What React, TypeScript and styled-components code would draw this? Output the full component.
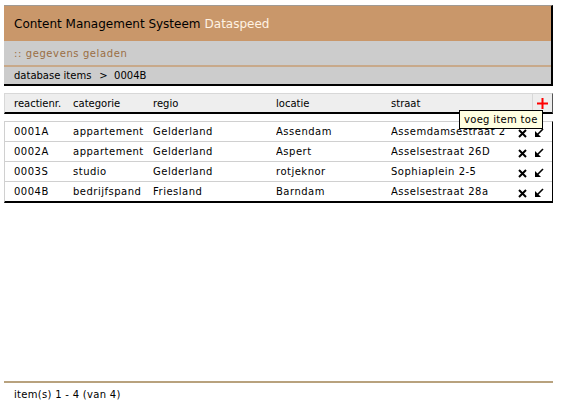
import React from "react";
import styled, { createGlobalStyle } from "styled-components";

const Global = createGlobalStyle`
  html, body { margin: 0; padding: 0; background: #fff; }
  body { font-family: "DejaVu Sans", Verdana, sans-serif; color: #000; }
`;

const Page = styled.div`
  width: 549px;
  margin-left: 4px;
  padding-top: 5px;
  height: 415px;
  display: flex;
  flex-direction: column;
`;

const Header = styled.div`
  border-top: 1px solid #a09a94;
  border-right: 2px solid #000;
  border-bottom: 2px solid #000;
`;

const TitleBar = styled.div`
  height: 35px;
  background: #c9976a;
  display: flex;
  align-items: center;
  padding-left: 10px;
  font-size: 12px;
  color: #000;
`;

const Brand = styled.span`
  color: #fff3e4;
  margin-left: 4px;
`;

const StatusBar = styled.div`
  height: 24px;
  background: #cccccc;
  border-bottom: 2px solid #c8a98a;
  display: flex;
  align-items: center;
  padding-left: 10px;
  font-size: 10px;
  letter-spacing: 0.6px;
  color: #9a6e44;
`;

const Crumb = styled.div`
  height: 17px;
  background: #cccccc;
  display: flex;
  align-items: center;
  padding-left: 10px;
  font-size: 10px;
  color: #000;
  gap: 8px;
`;

const cols = "59px 80px 123px 115px 124px 1fr";

const HeadRow = styled.div`
  margin-top: 7px;
  height: 18px;
  background: #eeeeee;
  border-top: 1px solid #d8d8d8;
  border-left: 1px solid #d8d8d8;
  border-right: 1px solid #555;
  border-bottom: 2px solid #000;
  display: grid;
  grid-template-columns: ${cols};
  align-items: center;
  padding-left: 9px;
  font-size: 10px;
  position: relative;
`;

const AddCell = styled.div`
  justify-self: end;
  align-self: stretch;
  width: 19px;
  border-left: 1px solid #d8d8d8;
  display: flex;
  align-items: center;
  justify-content: center;
`;

const Tooltip = styled.div`
  position: absolute;
  left: 454px;
  top: 16px;
  background: #ffffe1;
  border: 1px solid #000;
  padding: 3px 4px 3px 4px;
  font-size: 10px;
  letter-spacing: 0.3px;
  white-space: nowrap;
  z-index: 2;
`;

const Body = styled.div`
  margin-top: 7px;
  border-top: 1px solid #d0d0d0;
  border-left: 1px solid #d0d0d0;
  border-right: 1px solid #000;
  border-bottom: 2px solid #000;
`;

const Row = styled.div`
  height: 19px;
  display: grid;
  grid-template-columns: ${cols};
  align-items: center;
  padding-left: 9px;
  font-size: 10px;
  letter-spacing: 0.5px;
  & + & { border-top: 1px solid #d0d0d0; }
`;

const Cell = styled.div`
  white-space: nowrap;
  overflow: hidden;
`;

const Actions = styled.div`
  display: flex;
  justify-content: flex-end;
  align-items: center;
  gap: 7px;
  padding-right: 8px;
  padding-top: 3px;
`;

const Footer = styled.div`
  margin-top: auto;
  margin-bottom: 20px;
  border-top: 2px solid #b8a27e;
  padding: 6px 0 0 10px;
  font-size: 10px;
  letter-spacing: 0.3px;
`;

const Plus = () => (
  <svg width="11" height="11" viewBox="0 0 11 11">
    <rect x="4.5" y="0" width="2" height="11" fill="#ff0000" />
    <rect x="0" y="4.5" width="11" height="2" fill="#ff0000" />
  </svg>
);

const Cross = () => (
  <svg width="9" height="9" viewBox="0 0 9 9">
    <path d="M1 1 L8 8 M8 1 L1 8" stroke="#000" strokeWidth="2" />
  </svg>
);

const Arrow = () => (
  <svg width="10" height="10" viewBox="0 0 10 10">
    <path d="M9 1 L2 8" stroke="#000" strokeWidth="1.6" />
    <path d="M1 3 L1 9 L7 9 Z" fill="#000" />
  </svg>
);

const rows = [
  ["0001A", "appartement", "Gelderland", "Assendam", "Assemdamsestraat 2"],
  ["0002A", "appartement", "Gelderland", "Aspert", "Asselsestraat 26D"],
  ["0003S", "studio", "Gelderland", "rotjeknor", "Sophiaplein 2-5"],
  ["0004B", "bedrijfspand", "Friesland", "Barndam", "Asselsestraat 28a"],
];

export default function App() {
  return (
    <>
      <Global />
      <Page>
        <Header>
          <TitleBar>
            Content Management Systeem<Brand>Dataspeed</Brand>
          </TitleBar>
          <StatusBar>:: gegevens geladen</StatusBar>
          <Crumb>
            <span>database items</span>
            <span>&gt;&nbsp; 0004B</span>
          </Crumb>
        </Header>
        <HeadRow>
          <Cell>reactienr.</Cell>
          <Cell>categorie</Cell>
          <Cell>regio</Cell>
          <Cell>locatie</Cell>
          <Cell>straat</Cell>
          <AddCell>
            <Plus />
          </AddCell>
          <Tooltip>voeg item toe</Tooltip>
        </HeadRow>
        <Body>
          {rows.map((r) => (
            <Row key={r[0]}>
              {r.map((c, i) => (
                <Cell key={i}>{c}</Cell>
              ))}
              <Actions>
                <Cross />
                <Arrow />
              </Actions>
            </Row>
          ))}
        </Body>
        <Footer>item(s) 1 - 4 (van 4)</Footer>
      </Page>
    </>
  );
}
